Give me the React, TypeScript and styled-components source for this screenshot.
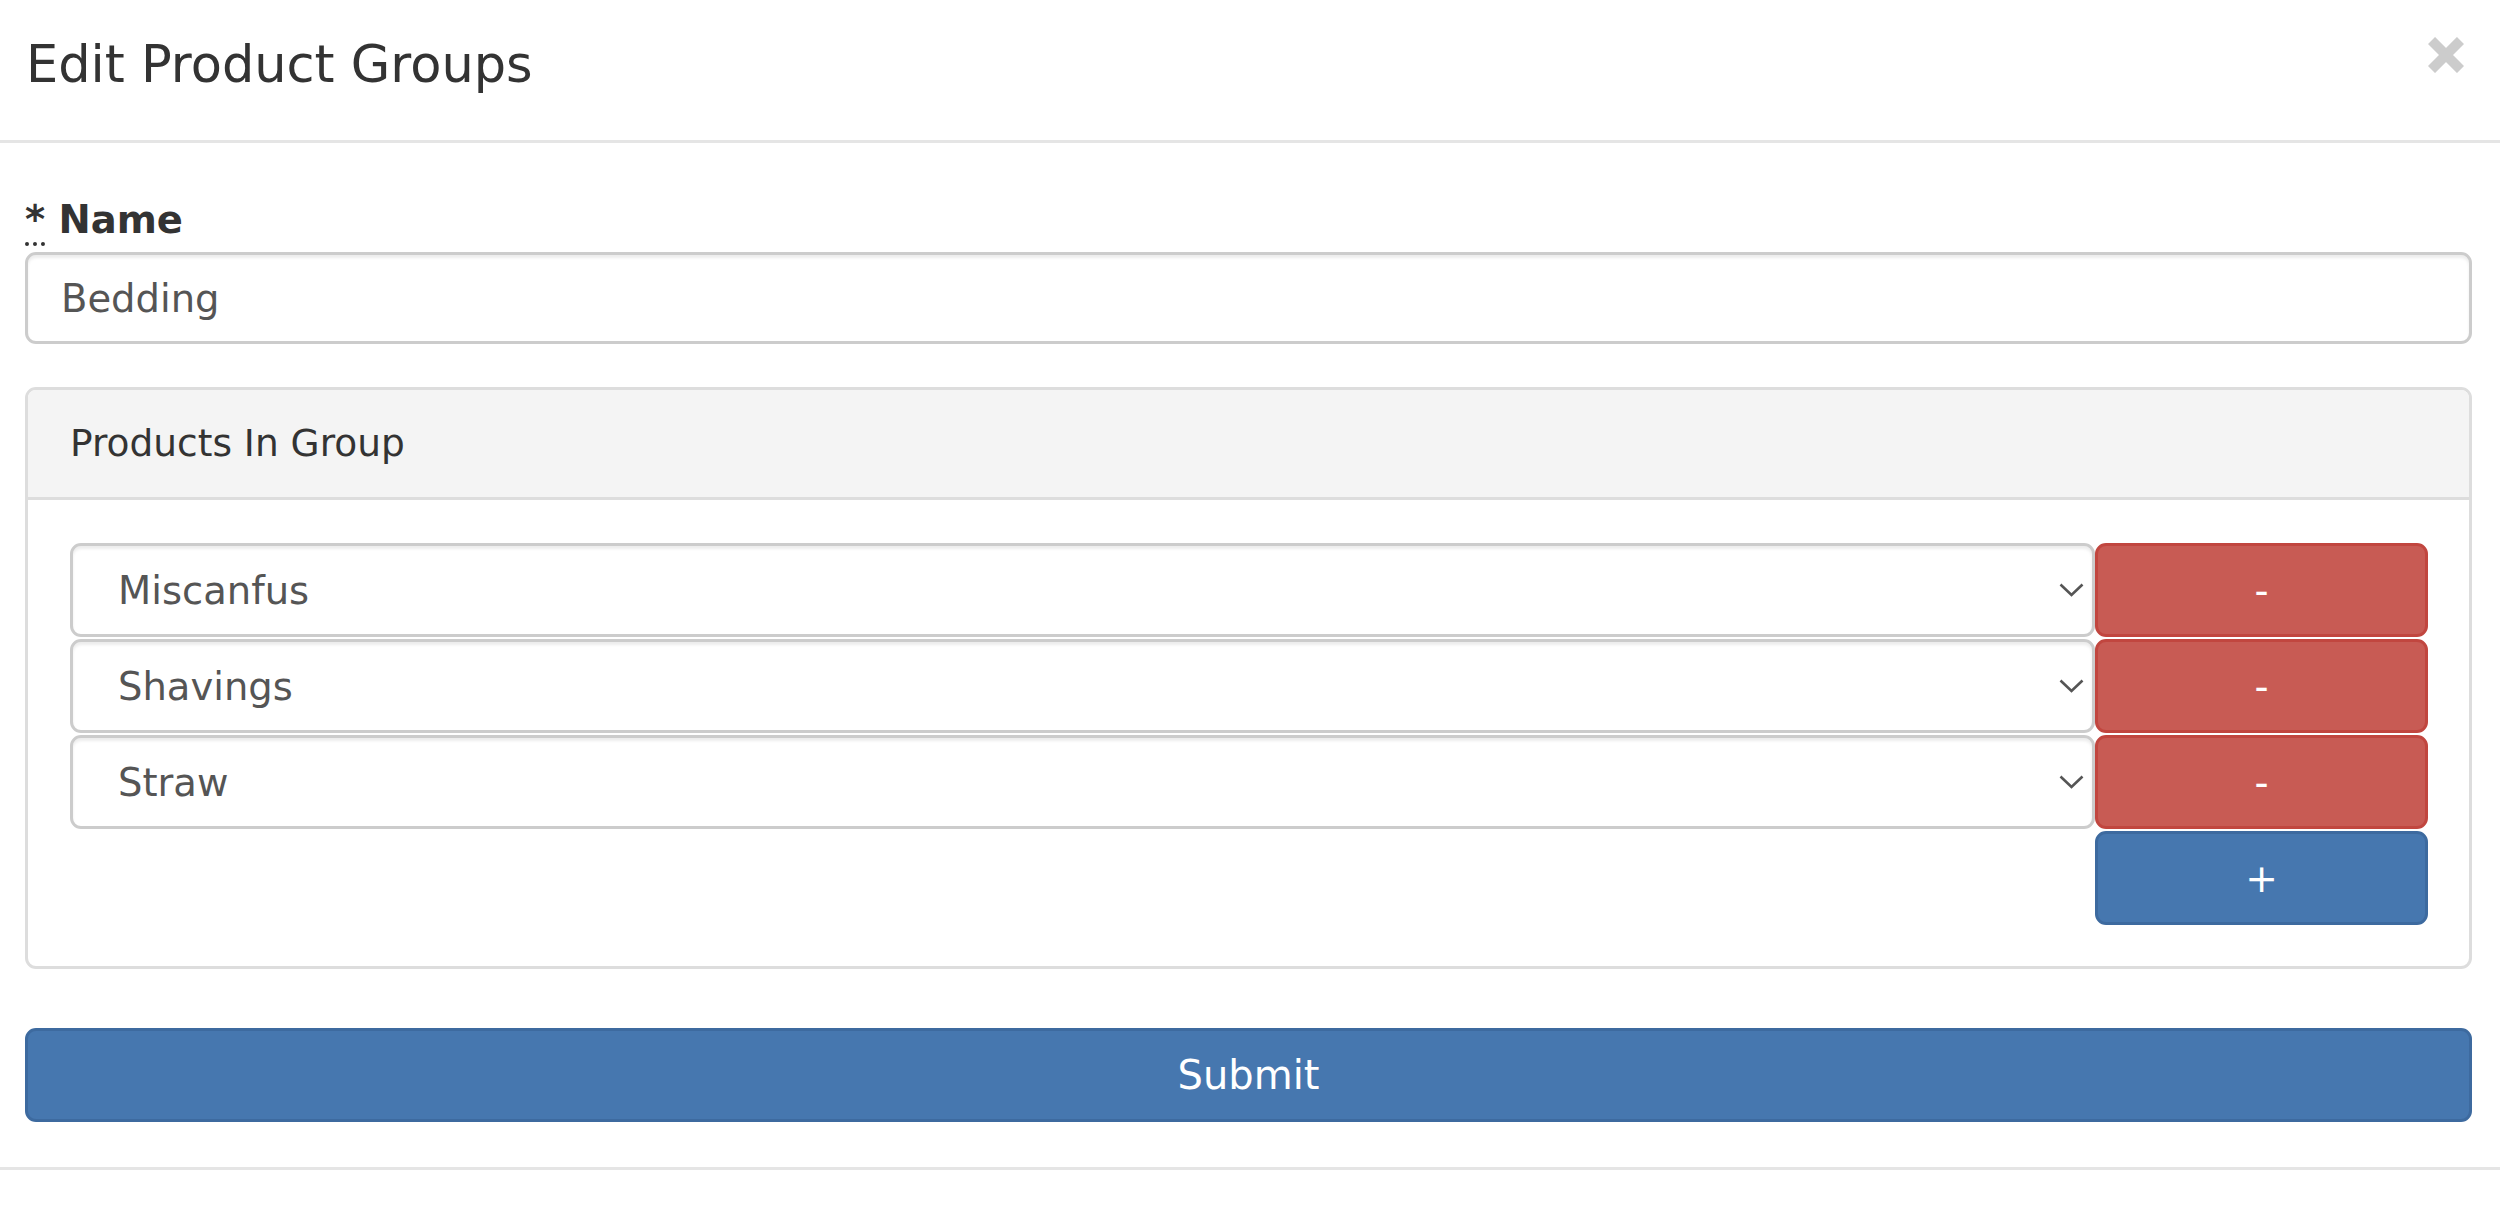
import React from "react";
import styled, { createGlobalStyle } from "styled-components";

const GlobalStyle = createGlobalStyle`
  html, body {
    margin: 0;
    padding: 0;
    background: #ffffff;
  }
  body {
    font-family: "DejaVu Sans", Verdana, sans-serif;
    font-size: 38.5px;
    color: #333333;
  }
  * { box-sizing: border-box; }
`;

const Modal = styled.div`
  width: 2500px;
  min-height: 1229px;
  display: flex;
  flex-direction: column;
  background: #ffffff;
`;

const Header = styled.div`
  display: flex;
  align-items: flex-start;
  justify-content: space-between;
  padding: 30px 36px 40px 26px;
  border-bottom: 3px solid #e5e5e5;
`;

const Title = styled.h4`
  margin: 0;
  font-size: 51px;
  font-weight: normal;
  line-height: 70px;
  color: #333333;
`;

const CloseButton = styled.button`
  margin-top: 7px;
  padding: 0;
  border: 0;
  background: transparent;
  width: 36px;
  height: 36px;
  display: flex;
  cursor: pointer;
  color: #cccccc;
`;

const Body = styled.div`
  padding: 49px 28px 45px 25px;
  display: flex;
  flex-direction: column;
`;

const FormGroup = styled.div`
  display: flex;
  flex-direction: column;
  margin-bottom: 43px;
`;

const Label = styled.label`
  display: block;
  font-weight: bold;
  line-height: 55px;
  margin-bottom: 5px;
  color: #333333;
`;

const Required = styled.abbr`
  text-decoration: none;
  border-bottom: 4px dotted #333333;
  cursor: help;
`;

const TextInput = styled.input`
  height: 92px;
  width: 100%;
  padding: 0 33px;
  font-family: inherit;
  font-size: 38.5px;
  color: #555555;
  background: #ffffff;
  border: 3px solid #cccccc;
  border-radius: 11px;
  box-shadow: inset 0 3px 3px rgba(0, 0, 0, 0.075);
  outline: none;
`;

const Panel = styled.div`
  border: 3px solid #dddddd;
  border-radius: 11px;
  background: #ffffff;
  overflow: hidden;
`;

const PanelHeading = styled.div`
  padding: 27px 42px;
  font-size: 37.5px;
  line-height: 53px;
  background: #f4f4f4;
  border-bottom: 3px solid #dddddd;
  color: #333333;
`;

const PanelBody = styled.div`
  padding: 43px 41px 41px 42px;
  display: flex;
  flex-direction: column;
  gap: 2px;
`;

const ProductRow = styled.div`
  display: flex;
  height: 94px;
`;

const SelectWrap = styled.div`
  position: relative;
  flex: 1;
  display: flex;
`;

const ProductSelect = styled.select`
  appearance: none;
  -webkit-appearance: none;
  width: 100%;
  height: 100%;
  padding: 0 60px 0 45px;
  font-family: inherit;
  font-size: 38.5px;
  color: #555555;
  background: #ffffff;
  border: 3px solid #cccccc;
  border-radius: 11px;
  box-shadow: inset 0 3px 3px rgba(0, 0, 0, 0.075);
  outline: none;
`;

const Chevron = styled.svg`
  position: absolute;
  right: 11px;
  top: 50%;
  margin-top: -7px;
  width: 25px;
  height: 14px;
  pointer-events: none;
`;

const ActionButton = styled.button<{ $variant: "danger" | "primary" }>`
  width: 333px;
  height: 94px;
  display: flex;
  align-items: center;
  justify-content: center;
  font-family: inherit;
  font-size: 39px;
  color: #ffffff;
  border-radius: 11px;
  cursor: pointer;
  background: ${(p) => (p.$variant === "danger" ? "#c85b54" : "#4677af")};
  border: 3px solid ${(p) => (p.$variant === "danger" ? "#c1463f" : "#3d6a9f")};
`;

const AddRow = styled.div`
  display: flex;
  justify-content: flex-end;
`;

const SubmitButton = styled.button`
  margin-top: 59px;
  width: 100%;
  height: 94px;
  font-family: inherit;
  font-size: 40px;
  color: #ffffff;
  background: #4677af;
  border: 3px solid #3d6a9f;
  border-radius: 11px;
  cursor: pointer;
`;

const Footer = styled.div`
  border-top: 3px solid #e5e5e5;
  flex: 1;
  min-height: 59px;
`;

const products = ["Miscanfus", "Shavings", "Straw"];

export default function App() {
  return (
    <>
      <GlobalStyle />
      <Modal>
        <Header>
          <Title>Edit Product Groups</Title>
          <CloseButton aria-label="Close">
            <svg width="36" height="36" viewBox="0 0 36 36">
              <path
                d="M3.5 3.5 L32.5 32.5 M32.5 3.5 L3.5 32.5"
                stroke="#cccccc"
                strokeWidth="10"
                strokeLinecap="butt"
                fill="none"
              />
            </svg>
          </CloseButton>
        </Header>
        <Body>
          <FormGroup>
            <Label htmlFor="name">
              <Required title="required">*</Required> Name
            </Label>
            <TextInput id="name" defaultValue="Bedding" />
          </FormGroup>
          <Panel>
            <PanelHeading>Products In Group</PanelHeading>
            <PanelBody>
              {products.map((p) => (
                <ProductRow key={p}>
                  <SelectWrap>
                    <ProductSelect defaultValue={p}>
                      {products.map((o) => (
                        <option key={o} value={o}>
                          {o}
                        </option>
                      ))}
                    </ProductSelect>
                    <Chevron viewBox="0 0 25 14">
                      <path
                        d="M1.5 1.5 L12.5 12 L23.5 1.5"
                        stroke="#555555"
                        strokeWidth="2.6"
                        fill="none"
                      />
                    </Chevron>
                  </SelectWrap>
                  <ActionButton $variant="danger">-</ActionButton>
                </ProductRow>
              ))}
              <AddRow>
                <ActionButton $variant="primary">+</ActionButton>
              </AddRow>
            </PanelBody>
          </Panel>
          <SubmitButton>Submit</SubmitButton>
        </Body>
        <Footer />
      </Modal>
    </>
  );
}
